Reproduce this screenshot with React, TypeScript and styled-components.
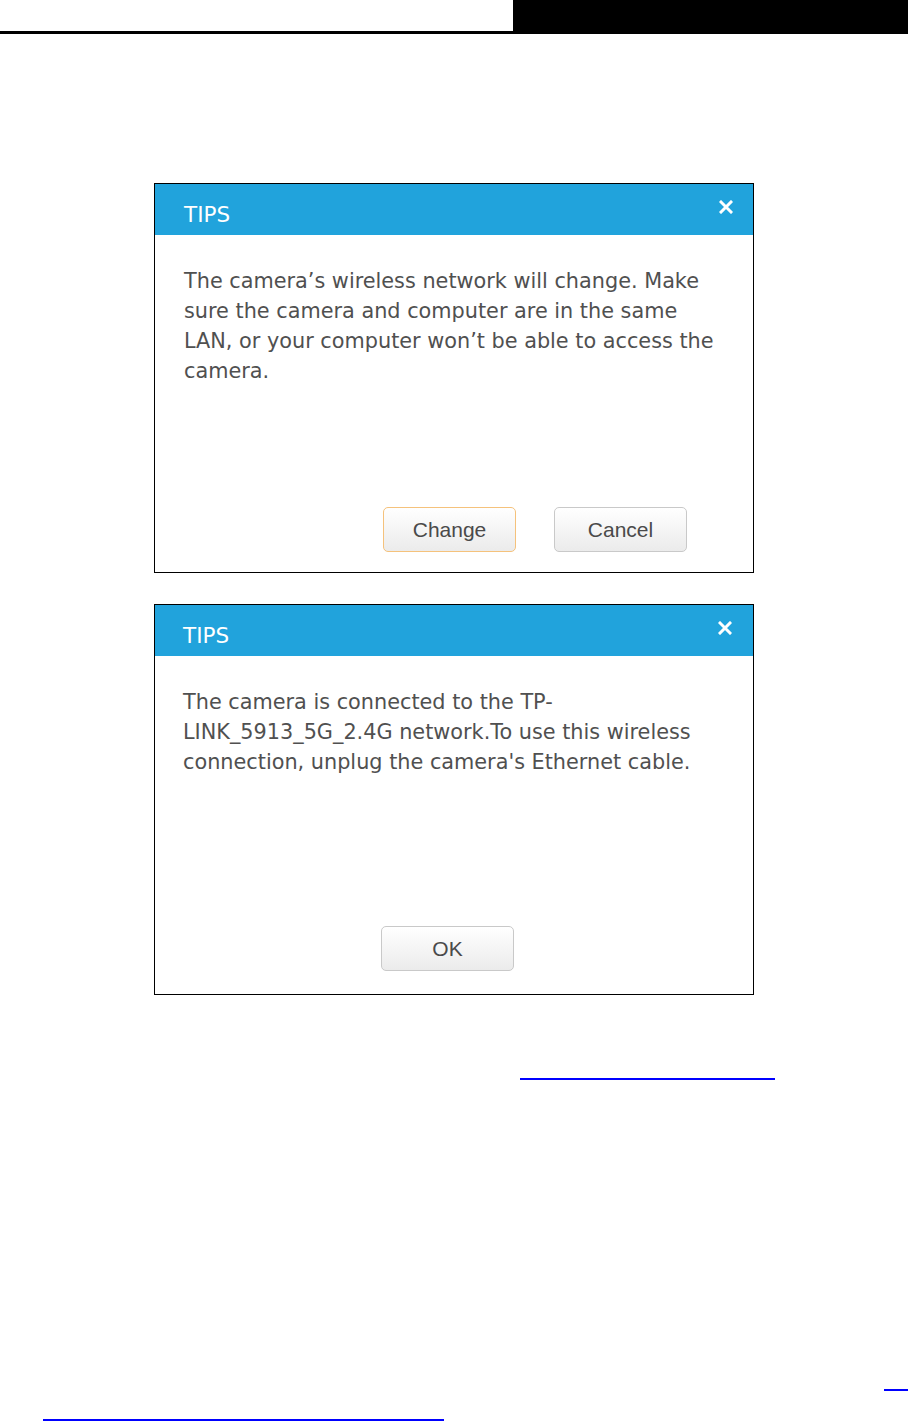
import { FC } from "react";
import styled, { createGlobalStyle } from "styled-components";

const GlobalStyle = createGlobalStyle`
  html, body {
    margin: 0;
    padding: 0;
    background: #ffffff;
  }
`;

const Page = styled.div`
  width: 908px;
  min-height: 1422px;
  background: #fff;
`;

const TopBar = styled.div`
  display: flex;
  height: 34px;
`;

const TopRule = styled.div`
  flex: 0 0 513px;
  height: 31px;
  border-bottom: 3px solid #000;
`;

const TopBlock = styled.div`
  flex: 1;
  background: #000;
`;

const Content = styled.div`
  padding-left: 154px;
`;

const Dialog = styled.div<{ $top: number; $height: number }>`
  box-sizing: border-box;
  width: 600px;
  height: ${(p) => p.$height}px;
  margin-top: ${(p) => p.$top}px;
  border: 1px solid #000;
  display: flex;
  flex-direction: column;
  background: #fff;
`;

const DialogHeader = styled.div<{ $inset: number; $closeInset: number }>`
  height: 51px;
  background: #21a3dc;
  display: flex;
  align-items: center;
  justify-content: space-between;
  padding: 0 ${(p) => p.$closeInset}px 0 ${(p) => p.$inset}px;
  color: #fff;
`;

const Title = styled.span`
  font-family: "DejaVu Sans", Verdana, sans-serif;
  font-size: 21.5px;
  padding-top: 10px;
`;

const CloseIcon = styled.svg`
  width: 14px;
  height: 14px;
  margin-bottom: 6px;
`;

const DialogBody = styled.div<{ $inset: number }>`
  flex: 1;
  display: flex;
  flex-direction: column;
  padding: 31px 20px 0 ${(p) => p.$inset}px;
`;

const Message = styled.p`
  margin: 0;
  font-family: "DejaVu Sans", Verdana, sans-serif;
  font-size: 20.8px;
  line-height: 30px;
  color: #505050;
  white-space: nowrap;
`;

const ButtonRow = styled.div<{ $left: number; $bottom: number }>`
  margin-top: auto;
  display: flex;
  gap: 38px;
  padding-left: ${(p) => p.$left}px;
  margin-bottom: ${(p) => p.$bottom}px;
`;

const Button = styled.button<{ $focus?: boolean }>`
  box-sizing: border-box;
  width: 133px;
  height: 45px;
  border-radius: 5px;
  border: 1px solid ${(p) => (p.$focus ? "#f5c27c" : "#c9c9c9")};
  background: linear-gradient(#ffffff, #ebebeb);
  font-family: "Liberation Sans", Arial, sans-serif;
  font-size: 21px;
  color: #4a4a4a;
  padding: 0;
`;

const LinkLine = styled.div<{ $left: number; $width: number; $top: number }>`
  margin-left: ${(p) => p.$left}px;
  margin-top: ${(p) => p.$top}px;
  width: ${(p) => p.$width}px;
  height: 2px;
  background: #0000ff;
`;

const Close: FC = () => (
  <CloseIcon viewBox="0 0 14 14">
    <path d="M2 2 L12 12 M12 2 L2 12" stroke="#fff" strokeWidth="3" strokeLinecap="square" />
  </CloseIcon>
);

export default function App() {
  return (
    <Page>
      <GlobalStyle />
      <TopBar>
        <TopRule />
        <TopBlock />
      </TopBar>
      <Content>
        <Dialog $top={149} $height={390}>
          <DialogHeader $inset={29} $closeInset={20}>
            <Title>TIPS</Title>
            <Close />
          </DialogHeader>
          <DialogBody $inset={29}>
            <Message>
              The camera’s wireless network will change. Make
              <br />
              sure the camera and computer are in the same
              <br />
              LAN, or your computer won’t be able to access the
              <br />
              camera.
            </Message>
            <ButtonRow $left={199} $bottom={20}>
              <Button $focus>Change</Button>
              <Button>Cancel</Button>
            </ButtonRow>
          </DialogBody>
        </Dialog>
        <Dialog $top={31} $height={391}>
          <DialogHeader $inset={28} $closeInset={21}>
            <Title>TIPS</Title>
            <Close />
          </DialogHeader>
          <DialogBody $inset={28}>
            <Message>
              The camera is connected to the TP-
              <br />
              LINK_5913_5G_2.4G network.To use this wireless
              <br />
              connection, unplug the camera's Ethernet cable.
            </Message>
            <ButtonRow $left={198} $bottom={23}>
              <Button>OK</Button>
            </ButtonRow>
          </DialogBody>
        </Dialog>
      </Content>
      <LinkLine $left={520} $width={255} $top={83} />
      <LinkLine $left={884} $width={24} $top={309} />
      <LinkLine $left={43} $width={401} $top={28} />
    </Page>
  );
}
